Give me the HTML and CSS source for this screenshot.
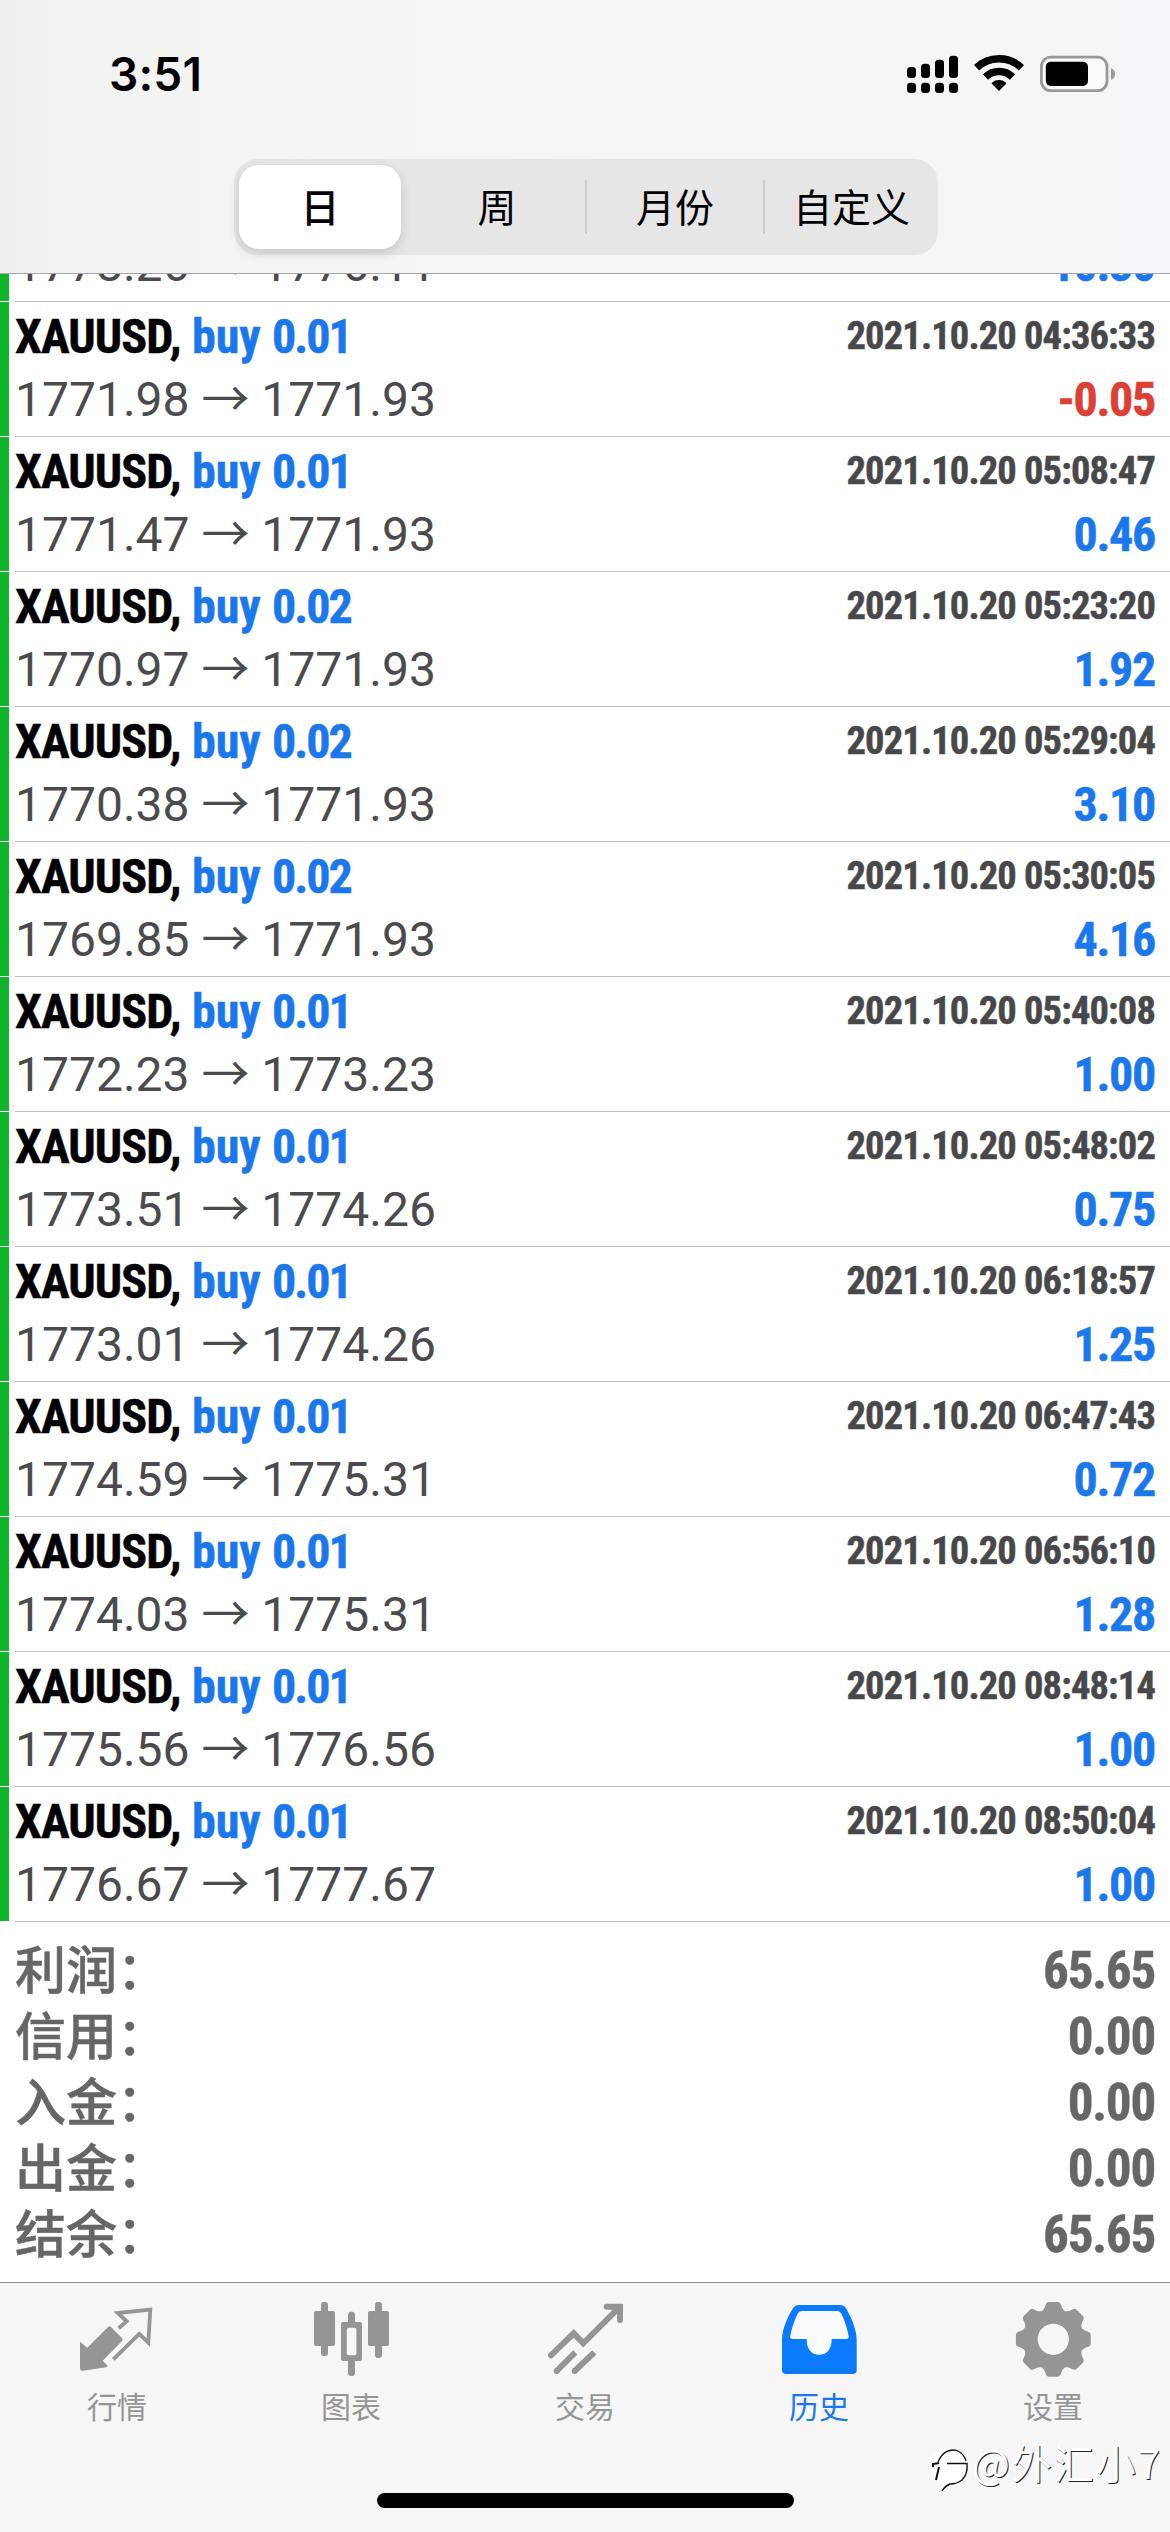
FILE: index.html
```html
<!DOCTYPE html>
<html lang="zh-CN">
<head>
<meta charset="utf-8">
<title>历史</title>
<link rel="stylesheet" href="styles.css">
</head>
<body>
<div class="screen">
  <header class="header">
    <div class="status">
      <span class="time">3:51</span>
      <svg class="status-icons" width="216" height="46" viewBox="0 0 216 46">
        <rect x="7" y="17" width="9" height="11" rx="3.5"/><rect x="21" y="13.7" width="9" height="14.3" rx="3.5"/><rect x="35" y="9.7" width="9" height="18.3" rx="3.5"/><rect x="49" y="5.7" width="9" height="22.3" rx="3.5"/>
        <rect x="7" y="32.7" width="9" height="10.3" rx="3.5"/><rect x="21" y="32.7" width="9" height="10.3" rx="3.5"/><rect x="35" y="32.7" width="9" height="10.3" rx="3.5"/><rect x="49" y="32.7" width="9" height="10.3" rx="3.5"/>
        <path d="M76.6 17.8A32.3 32.3 0 0 1 121.4 17.8M85.5 27A19.5 19.5 0 0 1 112.5 27" fill="none" stroke="#000" stroke-width="7.5"/>
        <path d="M99 41L91.8 33.8Q91.4 33 92.3 32.4A10.8 10.8 0 0 1 105.7 32.4Q106.6 33 106.2 33.8Z"/>
        <rect x="141.4" y="7.1" width="65.6" height="33.6" rx="9.5" fill="#fbfbfc" stroke="#999" stroke-width="2.8"/>
        <rect x="145.8" y="11.7" width="42.2" height="24.3" rx="5"/>
        <path d="M211 18.3Q215 20 215 24T211 30Z" fill="#999"/>
      </svg>
    </div>
    <nav class="segments">
      <span class="segment selected">日</span>
      <span class="segment">周</span>
      <span class="segment divided">月份</span>
      <span class="segment divided">自定义</span>
    </nav>
  </header>

  <main class="history">
    <div class="deal clipped"><div class="line second"><span class="price">1778.26 <i>→</i> 1776.11</span><span class="profit">10.30</span></div></div>
    <div class="deal"><div class="line"><span class="symbol">XAUUSD,</span><span class="side">buy</span><span class="lot">0.01</span><span class="date">2021.10.20 04:36:33</span></div><div class="line second"><span class="price">1771.98 <i>→</i> 1771.93</span><span class="profit loss">-0.05</span></div></div>
    <div class="deal"><div class="line"><span class="symbol">XAUUSD,</span><span class="side">buy</span><span class="lot">0.01</span><span class="date">2021.10.20 05:08:47</span></div><div class="line second"><span class="price">1771.47 <i>→</i> 1771.93</span><span class="profit">0.46</span></div></div>
    <div class="deal"><div class="line"><span class="symbol">XAUUSD,</span><span class="side">buy</span><span class="lot">0.02</span><span class="date">2021.10.20 05:23:20</span></div><div class="line second"><span class="price">1770.97 <i>→</i> 1771.93</span><span class="profit">1.92</span></div></div>
    <div class="deal"><div class="line"><span class="symbol">XAUUSD,</span><span class="side">buy</span><span class="lot">0.02</span><span class="date">2021.10.20 05:29:04</span></div><div class="line second"><span class="price">1770.38 <i>→</i> 1771.93</span><span class="profit">3.10</span></div></div>
    <div class="deal"><div class="line"><span class="symbol">XAUUSD,</span><span class="side">buy</span><span class="lot">0.02</span><span class="date">2021.10.20 05:30:05</span></div><div class="line second"><span class="price">1769.85 <i>→</i> 1771.93</span><span class="profit">4.16</span></div></div>
    <div class="deal"><div class="line"><span class="symbol">XAUUSD,</span><span class="side">buy</span><span class="lot">0.01</span><span class="date">2021.10.20 05:40:08</span></div><div class="line second"><span class="price">1772.23 <i>→</i> 1773.23</span><span class="profit">1.00</span></div></div>
    <div class="deal"><div class="line"><span class="symbol">XAUUSD,</span><span class="side">buy</span><span class="lot">0.01</span><span class="date">2021.10.20 05:48:02</span></div><div class="line second"><span class="price">1773.51 <i>→</i> 1774.26</span><span class="profit">0.75</span></div></div>
    <div class="deal"><div class="line"><span class="symbol">XAUUSD,</span><span class="side">buy</span><span class="lot">0.01</span><span class="date">2021.10.20 06:18:57</span></div><div class="line second"><span class="price">1773.01 <i>→</i> 1774.26</span><span class="profit">1.25</span></div></div>
    <div class="deal"><div class="line"><span class="symbol">XAUUSD,</span><span class="side">buy</span><span class="lot">0.01</span><span class="date">2021.10.20 06:47:43</span></div><div class="line second"><span class="price">1774.59 <i>→</i> 1775.31</span><span class="profit">0.72</span></div></div>
    <div class="deal"><div class="line"><span class="symbol">XAUUSD,</span><span class="side">buy</span><span class="lot">0.01</span><span class="date">2021.10.20 06:56:10</span></div><div class="line second"><span class="price">1774.03 <i>→</i> 1775.31</span><span class="profit">1.28</span></div></div>
    <div class="deal"><div class="line"><span class="symbol">XAUUSD,</span><span class="side">buy</span><span class="lot">0.01</span><span class="date">2021.10.20 08:48:14</span></div><div class="line second"><span class="price">1775.56 <i>→</i> 1776.56</span><span class="profit">1.00</span></div></div>
    <div class="deal"><div class="line"><span class="symbol">XAUUSD,</span><span class="side">buy</span><span class="lot">0.01</span><span class="date">2021.10.20 08:50:04</span></div><div class="line second"><span class="price">1776.67 <i>→</i> 1777.67</span><span class="profit">1.00</span></div></div>
  </main>

  <section class="summary">
    <div class="total"><span class="label">利润：</span><span class="amount">65.65</span></div>
    <div class="total"><span class="label">信用：</span><span class="amount">0.00</span></div>
    <div class="total"><span class="label">入金：</span><span class="amount">0.00</span></div>
    <div class="total"><span class="label">出金：</span><span class="amount">0.00</span></div>
    <div class="total"><span class="label">结余：</span><span class="amount">65.65</span></div>
  </section>

  <footer class="footer">
    <nav class="tabs">
      <div class="tab">
        <svg width="77" height="78" viewBox="0 0 77 78">
          <path d="M1 41.7L8.3 47.7L29 27Q30.3 25.4 32 27L43 38Q44.2 39.4 43 41L23.7 60.7L28 65Q29.4 66.6 27 67.2L4 70.7Q1 71 1 68Z" fill="#959595"/>
          <path d="M39.7 28.3L47.7 21.3L38.7 13L71.3 9.7L69.3 42.7L60.3 34L34.3 59.3" fill="none" stroke="#959595" stroke-width="3.8"/>
        </svg>
        <span>行情</span>
      </div>
      <div class="tab">
        <svg width="77" height="78" viewBox="0 0 77 78" fill="#959595">
          <rect x="1" y="11" width="21" height="35" rx="2"/><rect x="8" y="2" width="7" height="54" rx="3"/>
          <rect x="55" y="11" width="21" height="35" rx="2"/><rect x="62" y="2" width="7" height="56" rx="3"/>
          <rect x="35" y="11.7" width="7" height="20" rx="3"/><rect x="35" y="56" width="7" height="20" rx="3"/>
          <rect x="28" y="22" width="21" height="39" rx="2"/><rect x="33.8" y="27.8" width="9.6" height="27.4" rx="2" fill="#f8f8f8"/>
        </svg>
        <span>图表</span>
      </div>
      <div class="tab">
        <svg width="77" height="78" viewBox="0 0 77 78" fill="none" stroke="#959595" stroke-width="6">
          <path d="M4 55.3L26.7 33.3L36.3 43.3L72.3 7.3M59.7 6.7H73V20" stroke-linecap="round"/>
          <path d="M9.7 71L28.3 52.3M27.7 71L47.3 52.3"/>
          <path d="M9.7 71h.01M27.7 71h.01" stroke-linecap="round"/>
        </svg>
        <span>交易</span>
      </div>
      <div class="tab active">
        <svg width="77" height="78" viewBox="0 0 77 78">
          <path d="M18 5H59Q63.5 5 65.5 9C70 17 75.7 29 75.7 40V70Q75.7 74 71.7 74H5Q1 74 1 70V40C1 29 6.5 17 11.5 9Q13.5 5 18 5Z" fill="#0a7aff"/>
          <path d="M21 11H56Q59 11 60.5 14Q65 23 67.7 36Q68.2 39 65 39H50.7C50.7 49 46.5 54.7 38.2 54.7S25.7 49 25.7 39H12Q8.5 39 9.2 36Q12 23 16.5 14Q18 11 21 11Z" fill="#f9fafb"/>
        </svg>
        <span>历史</span>
      </div>
      <div class="tab">
        <svg width="77" height="78" viewBox="0 0 77 78">
          <defs><path id="tooth" d="M-12 -28Q-9.5 -29.5 -8.5 -32L-7.5 -35Q-6.6 -37.4 -4.5 -37.4H4.5Q6.6 -37.4 7.5 -35L8.5 -32Q9.5 -29.5 12 -28Z"/></defs>
          <g transform="translate(38.3 39.3)" fill="#959595">
            <circle r="22.9" fill="none" stroke="#959595" stroke-width="14.6"/>
            <use href="#tooth"/><use href="#tooth" transform="rotate(45)"/><use href="#tooth" transform="rotate(90)"/><use href="#tooth" transform="rotate(135)"/><use href="#tooth" transform="rotate(180)"/><use href="#tooth" transform="rotate(225)"/><use href="#tooth" transform="rotate(270)"/><use href="#tooth" transform="rotate(315)"/>
          </g>
        </svg>
        <span>设置</span>
      </div>
    </nav>
    <div class="home"></div>
    <div class="watermark">
      <svg width="42" height="46" viewBox="0 0 42 46">
        <path d="M1 18C1 7 9 0 20 0S39 6 39 15.5C40 26 32 35 22 36Q17 38 14 43V35C6 34 1 27 1 18Z" fill="#fff"/>
        <path d="M5 19V16L11 15M11 19L8 32" fill="none" stroke="#111" stroke-width="2"/>
        <path d="M10 14C14 4 22 0 30 3Q36 6 38 13" fill="none" stroke="#111" stroke-width="1.3"/>
        <path d="M19 15.5H39Q40 26 34 32Q29 36 22 36Q17 38 14 43" fill="none" stroke="#111" stroke-width="1.4"/>
      </svg>
      <span>@外汇小7</span>
    </div>
  </footer>
</div>
</body>
</html>
```
FILE: styles.css
```css
* { box-sizing: border-box; }
body { margin: 0; background: #fff; }

.screen {
  width: 1170px;
  height: 2532px;
  display: flex;
  flex-direction: column;
  overflow: hidden;
  font-family: Roboto, "Noto Sans CJK SC", sans-serif;
}

/* Header */
.header {
  height: 274px;
  flex: none;
  border-bottom: 1px solid #a6a6a8;
  background: linear-gradient(90deg, #edf0ed 0, #f2f2f2 70px, #f5f4f3 240px, #f5f5f5 600px, #f4f5f6 1000px, #f4f5f8 1170px);
}
.status {
  height: 159px;
  padding: 44px 54px 0 109px;
  display: flex;
  justify-content: space-between;
  align-items: flex-start;
}
.time { font: 600 46px/61px Inter, sans-serif; letter-spacing: 0.2px; }
.status-icons { margin-top: 6px; }
.segments {
  width: 704px;
  height: 96px;
  margin-left: 234px;
  padding: 6px 0;
  display: grid;
  grid-template-columns: 173px 178px 178px 175px;
  align-items: center;
  border-radius: 24px;
  background: #e6e6e7;
  font: 400 39px/72px "Noto Sans CJK SC", sans-serif;
  text-align: center;
}
.segment { height: 54px; line-height: 50px; border-left: 2px solid transparent; }
.segment.divided { border-color: #cfcfd1; }
.segment.selected {
  width: 162px;
  height: 84px;
  margin-left: 5px;
  line-height: 80px;
  border: 0;
  border-radius: 20px;
  background: #fff;
  box-shadow: 0 4px 12px rgba(0, 0, 0, .14);
  font-weight: 500;
}

/* Deals */
.deal {
  height: 135px;
  padding: 4px 15px 0 15px;
  background:
    linear-gradient(#bdbdbf, #bdbdbf) 15px 100% / 100% 1px no-repeat,
    linear-gradient(#10b52c, #10b52c) 0 0 / 9px calc(100% - 1px) no-repeat;
}
/* row scrolled partly beneath the header */
.deal.clipped {
  height: 28px;
  padding-top: 0;
  padding-bottom: 6px;
  display: flex;
  flex-direction: column;
  justify-content: flex-end;
  overflow: hidden;
}
.line { display: flex; flex: none; height: 61px; line-height: 61px; font-size: 48px; white-space: nowrap; }
.line.second { height: 64px; line-height: 65px; justify-content: space-between; }
.symbol, .side, .lot, .date, .profit, .amount {
  font-weight: 700;
  font-stretch: 75%;
  -webkit-text-stroke: 0.5px currentColor;
}
.symbol { width: 177px; letter-spacing: -0.9px; }
.side { width: 80px; color: #1b78ec; }
.lot { color: #1b78ec; letter-spacing: -2px; }
.date {
  margin-left: auto;
  color: #48484b;
  font-size: 38.5px;
  line-height: 60px;
  letter-spacing: -0.85px;
}
.price { color: #4b4b4e; }
.price i { font-family: "Noto Sans CJK SC", sans-serif; font-style: normal; line-height: 0; }
.profit { color: #1b78ec; letter-spacing: -1.3px; }
.profit.loss { color: #dc4034; }

/* Totals */
.summary { height: 360px; flex: none; padding: 15px 15px 0 15px; color: #666; }
.total { height: 66px; display: flex; justify-content: space-between; }
.label { font: 500 51px/60px "Noto Sans CJK SC", sans-serif; -webkit-text-stroke: 0.5px currentColor; }
.amount { font-size: 51px; line-height: 67px; letter-spacing: -1.2px; }

/* Tab bar */
.footer {
  position: relative;
  flex: 1;
  padding-top: 17px;
  display: flex;
  flex-direction: column;
  border-top: 1px solid #8e8e90;
  background: #f6f6f6;
}
.tabs { display: grid; grid-template-columns: repeat(5, 1fr); }
.tab {
  display: flex;
  flex-direction: column;
  align-items: center;
  gap: 9px;
  color: #959595;
  font: 400 30px/36px "Noto Sans CJK SC", sans-serif;
}
.tab.active { color: #1b78ec; }
.home { width: 417px; height: 15px; margin: auto auto 24px; border-radius: 8px; background: #000; }
.watermark {
  position: absolute;
  right: 8px;
  top: 156px;
  display: flex;
  align-items: flex-start;
  gap: 2px;
  color: #fff;
  font: 400 40px/46px "Noto Sans CJK SC", sans-serif;
  letter-spacing: 2px;
  text-shadow: 1px 1px 0 #222;
}
.watermark svg { margin-top: 9px; }
```
